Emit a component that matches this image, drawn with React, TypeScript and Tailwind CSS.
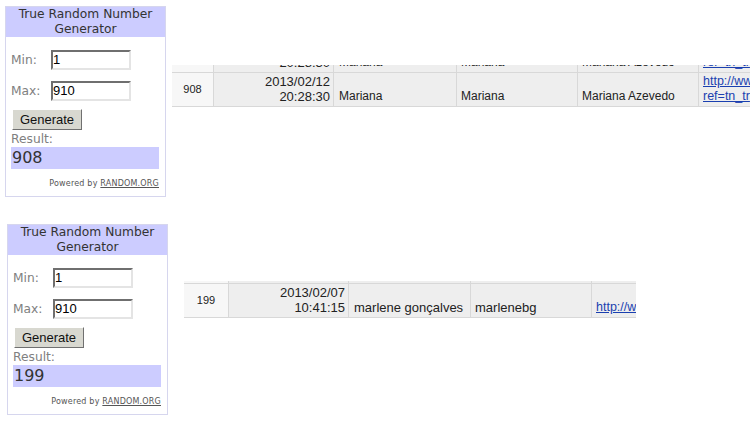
import React from 'react';

const widgetFont = { fontFamily: '"DejaVu Sans", Verdana, sans-serif' };
const tableFont = { fontFamily: '"Liberation Sans", Arial, sans-serif' };

function RandomWidget({ result }: { result: string }) {
  return (
    <div className="w-[161px] shrink-0 border border-[#d6d6ee] bg-white" style={widgetFont}>
      {/* header */}
      <div className="bg-[#ccccff] text-center text-[12.25px] leading-[15px] text-[#333]">
        True Random Number
        <br />
        Generator
      </div>

      <div className="pl-[5px] pt-[13px] text-[12.25px] text-[#808080]">
        <div className="flex items-center h-[20px]">
          <span className="w-[40px]">Min:</span>
          <Field value="1" />
        </div>
        <div className="flex items-center h-[20px] mt-[11px]">
          <span className="w-[40px]">Max:</span>
          <Field value="910" />
        </div>

        <button className="ml-[1px] mt-[8px] h-[21px] w-[70px] bg-[#d8d8d0] border border-t-white border-l-white border-b-[#707070] border-r-[#707070] text-[13px] text-[#111] leading-none" style={tableFont}>
          Generate
        </button>

        <div className="mt-[2px] leading-[14px]">Result:</div>
        <div className="mt-[1px] w-[148px] h-[22px] bg-[#ccccff] pl-[1px] text-[16px] leading-[22px] text-[#333]">
          {result}
        </div>

        <div className="mt-[10px] mb-[7px] pr-[6px] text-right text-[8px] leading-[10px] tracking-[0.2px] text-[#555]">
          Powered by <span className="underline">RANDOM.ORG</span>
        </div>
      </div>
    </div>
  );
}

function Field({ value }: { value: string }) {
  return (
    <div
      className="w-[80px] h-[20px] border-2 border-t-[#6f6f6f] border-l-[#6f6f6f] border-b-[#e4e4e4] border-r-[#e4e4e4] bg-white text-[13px] leading-[16px] text-black"
      style={tableFont}
    >
      {value}
    </div>
  );
}

type Row = {
  id: string;
  date: string;
  time: string;
  name: string;
  user: string;
  full: string;
  link: string[];
};

function DataRow({ row, widths, size }: { row: Row; widths: number[]; size: string }) {
  return (
    <div className="flex h-[34px] border-b border-[#d8d8d8] bg-[#eeeeee] text-[#222]" style={tableFont}>
      <div className="shrink-0 flex items-center justify-center bg-[#f7f7f7] border-r border-[#d8d8d8] text-[11px]" style={{ width: widths[0] }}>
        {row.id}
      </div>
      <div className="shrink-0 flex flex-col justify-end items-end pr-[3px] pb-[2px] border-r border-[#d8d8d8] text-[13px] leading-[15px]" style={{ width: widths[1] }}>
        <span>{row.date}</span>
        <span>{row.time}</span>
      </div>
      <div className={`shrink-0 flex items-end pl-[5px] pb-[2px] leading-[15px] border-r border-[#d8d8d8] whitespace-nowrap overflow-hidden ${size}`} style={{ width: widths[2] }}>
        {row.name}
      </div>
      <div className={`shrink-0 flex items-end pl-[4px] pb-[2px] leading-[15px] border-r border-[#d8d8d8] whitespace-nowrap overflow-hidden ${size}`} style={{ width: widths[3] }}>
        {row.user}
      </div>
      {widths.length > 5 && (
        <div className={`shrink-0 flex items-end pl-[4px] pb-[2px] leading-[15px] border-r border-[#d8d8d8] whitespace-nowrap overflow-hidden ${size}`} style={{ width: widths[4] }}>
          {row.full}
        </div>
      )}
      <div className="shrink-0 flex flex-col justify-end pl-[4px] pb-[2px] text-[12.5px] leading-[15px] text-[#1a3fb0] whitespace-nowrap overflow-hidden" style={{ width: widths[widths.length - 1] }}>
        {row.link.map((l) => (
          <span key={l} className="underline">{l}</span>
        ))}
      </div>
    </div>
  );
}

const rowsTop: Row[] = [
  { id: '907', date: '2013/02/12', time: '20:28:30', name: 'Mariana', user: 'Mariana', full: 'Mariana Azevedo', link: ['http://www', 'ref=tn_tr'] },
  { id: '908', date: '2013/02/12', time: '20:28:30', name: 'Mariana', user: 'Mariana', full: 'Mariana Azevedo', link: ['http://www', 'ref=tn_tr'] },
];

const rowsBottom: Row[] = [
  { id: '198', date: '2013/02/07', time: '10:41:10', name: 'marlene gonçalves', user: 'marlenebg', full: '', link: ['http://w'] },
  { id: '199', date: '2013/02/07', time: '10:41:15', name: 'marlene gonçalves', user: 'marlenebg', full: '', link: ['http://w'] },
];

export default function App() {
  return (
    <div className="w-[753px] h-[440px] bg-white overflow-hidden">
      <div className="flex items-start pt-[6px] pl-[5px]">
        <RandomWidget result="908" />
        <div className="ml-[6px] mt-[59px] w-[578px] h-[42px] overflow-hidden">
          <div className="-mt-[26px]">
            {rowsTop.map((r) => (
              <DataRow key={r.id} row={r} widths={[42, 120, 123, 121, 121, 60]} size="text-[12px]" />
            ))}
          </div>
        </div>
      </div>

      <div className="flex items-start mt-[27px] pl-[7px]">
        <RandomWidget result="199" />
        <div className="ml-[16px] mt-[57px] w-[452px] h-[37px] overflow-hidden">
          <div className="-mt-[31px]">
            {rowsBottom.map((r) => (
              <DataRow key={r.id} row={r} widths={[45, 120, 122, 121, 50]} size="text-[13px]" />
            ))}
          </div>
        </div>
      </div>
    </div>
  );
}
